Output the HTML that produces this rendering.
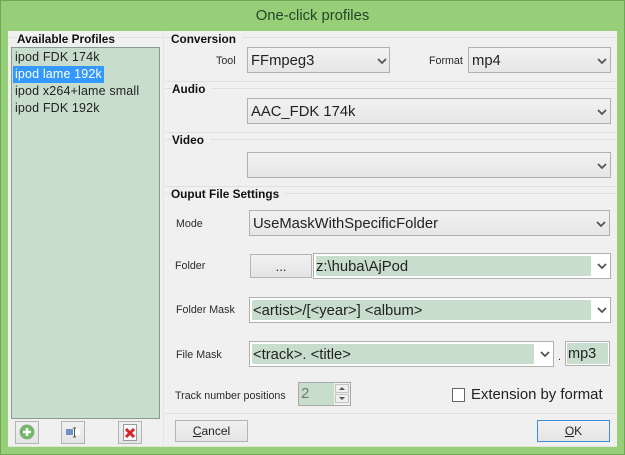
<!DOCTYPE html>
<html><head><meta charset="utf-8">
<style>
html,body{margin:0;padding:0}
body{width:625px;height:455px;overflow:hidden;position:relative;background:#96cf78;font-family:"Liberation Sans",sans-serif;color:#1a1a1a}
div,span{position:absolute;box-sizing:border-box;white-space:nowrap}
svg{position:absolute}
.t{font-size:10.7px;color:#2a2a2a;line-height:14px}
.h{font-size:11.8px;font-weight:bold;color:#111;line-height:14px}
.l{height:1px;background:#dfdfdf}
.c{border:1px solid #b0b0b0;background:linear-gradient(#f2f2f2,#e6e6e6);font-size:14.8px;line-height:26px;padding-left:3px;color:#222}
.w{border:1px solid #b0b0b0;background:#fff}
.g{background:#c9ddcd;font-size:14.8px;color:#222}
.b{border:1px solid #b4b4b4;background:linear-gradient(#f1f1f1,#e4e4e4);font-size:12px;text-align:center;color:#222}
.i{border:1px solid #c4c4c4;background:#efefef}
.a{width:10px;height:6px}
.li{left:15px;font-size:12.5px;line-height:17px;color:#222;letter-spacing:.15px}
</style></head><body>
<div style="left:0;top:0;width:625px;height:455px;border:1px solid #6fa855"></div>
<div style="left:0;top:8px;width:625px;text-align:center;font-size:14.8px;line-height:17px;color:#25452a">One-click profiles</div>
<div style="left:8px;top:31px;width:609px;height:416px;background:#f0f0f0;border-bottom:1px solid #dfe6da"></div>

<div class="l" style="left:9px;top:37px;width:155px"></div>
<div style="left:163px;top:31px;width:1px;height:415px;background:#e4e4e4"></div>
<div class="h" style="left:17px;top:32px;background:#f0f0f0;padding-right:3px">Available Profiles</div>
<div style="left:11px;top:47px;width:149px;height:372px;background:#c9ddcd;border:1px solid #8b9a90"></div>
<div class="li" style="top:49px">ipod FDK 174k</div>
<div style="left:13px;top:66px;width:91px;height:17px;background:#3399ff"></div>
<div class="li" style="top:66px;color:#fff">ipod lame 192k</div>
<div class="li" style="top:83px">ipod x264+lame small</div>
<div class="li" style="top:100px">ipod FDK 192k</div>

<div class="b" style="left:15px;top:421px;width:24px;height:23px"></div>
<svg style="left:19px;top:424px" width="16" height="16" viewBox="0 0 16 16"><circle cx="8" cy="8" r="7" fill="#6cbb62" stroke="#8fa98a"/><path d="M8 4v8M4 8h8" stroke="#fff" stroke-width="2.6"/></svg>
<div class="b" style="left:61px;top:421px;width:24px;height:23px"></div>
<svg style="left:65px;top:426px" width="16" height="13" viewBox="0 0 16 13"><rect x="1" y="3" width="14" height="6" fill="#fff"/><rect x="1" y="3" width="7" height="6" fill="#6f93c4"/><path d="M8 2h3M9.500 2v9M8 11h3" stroke="#555" fill="none"/></svg>
<div class="b" style="left:118px;top:421px;width:24px;height:23px"></div>
<svg style="left:123px;top:424px" width="14" height="17" viewBox="0 0 14 17"><rect x=".5" y=".5" width="13" height="16" fill="#fafafa" stroke="#999"/><path d="M3 5l8 8M11 5l-8 8" stroke="#d8232a" stroke-width="3"/></svg>

<div class="l" style="left:165px;top:37px;width:451px"></div>
<div class="h" style="left:171px;top:32px;background:#f0f0f0;padding-right:6px">Conversion</div>
<div class="t" style="left:216px;top:54px">Tool</div>
<div class="c" style="left:247px;top:47px;width:143px;height:26px">FFmpeg3</div>
<svg class="a" style="left:377px;top:58px" viewBox="0 0 10 6"><path d="M1 1l4 4 4-4" fill="none" stroke="#555" stroke-width="1.800"/></svg>
<div class="t" style="left:429px;top:54px">Format</div>
<div class="c" style="left:468px;top:47px;width:143px;height:26px">mp4</div>
<svg class="a" style="left:597px;top:58px" viewBox="0 0 10 6"><path d="M1 1l4 4 4-4" fill="none" stroke="#555" stroke-width="1.800"/></svg>

<div class="l" style="left:165px;top:81px;width:451px"></div>
<div class="l" style="left:165px;top:88px;width:451px"></div>
<div class="h" style="left:172px;top:82px;background:#f0f0f0;padding-right:6px">Audio</div>
<div class="c" style="left:247px;top:98px;width:364px;height:26px">AAC_FDK 174k</div>
<svg class="a" style="left:597px;top:109px" viewBox="0 0 10 6"><path d="M1 1l4 4 4-4" fill="none" stroke="#555" stroke-width="1.800"/></svg>

<div class="l" style="left:165px;top:132px;width:451px"></div>
<div class="l" style="left:165px;top:139px;width:451px"></div>
<div class="h" style="left:172px;top:133px;background:#f0f0f0;padding-right:6px">Video</div>
<div class="c" style="left:247px;top:152px;width:364px;height:26px"></div>
<svg class="a" style="left:597px;top:163px" viewBox="0 0 10 6"><path d="M1 1l4 4 4-4" fill="none" stroke="#555" stroke-width="1.800"/></svg>

<div class="l" style="left:165px;top:186px;width:451px"></div>
<div class="l" style="left:165px;top:193px;width:451px"></div>
<div class="h" style="left:171px;top:187px;background:#f0f0f0;padding-right:6px">Ouput File Settings</div>

<div class="t" style="left:176px;top:217px">Mode</div>
<div class="c" style="left:249px;top:210px;width:361px;height:26px">UseMaskWithSpecificFolder</div>
<svg class="a" style="left:596px;top:221px" viewBox="0 0 10 6"><path d="M1 1l4 4 4-4" fill="none" stroke="#555" stroke-width="1.800"/></svg>

<div class="t" style="left:175px;top:259px">Folder</div>
<div class="b" style="left:250px;top:254px;width:62px;height:24px;line-height:24px;font-size:13px">...</div>
<div class="w" style="left:313px;top:253px;width:298px;height:26px"></div>
<div class="g" style="left:316px;top:256px;width:275px;height:20px;line-height:22px;padding-left:0">z:\huba\AjPod</div>
<svg class="a" style="left:597px;top:263px" viewBox="0 0 10 6"><path d="M1 1l4 4 4-4" fill="none" stroke="#555" stroke-width="1.800"/></svg>

<div class="t" style="left:176px;top:303px">Folder Mask</div>
<div class="w" style="left:249px;top:297px;width:362px;height:26px"></div>
<div class="g" style="left:252px;top:300px;width:339px;height:20px;line-height:22px;padding-left:1px">&lt;artist&gt;/[&lt;year&gt;] &lt;album&gt;</div>
<svg class="a" style="left:597px;top:307px" viewBox="0 0 10 6"><path d="M1 1l4 4 4-4" fill="none" stroke="#555" stroke-width="1.800"/></svg>

<div class="t" style="left:176px;top:348px">File Mask</div>
<div class="w" style="left:249px;top:341px;width:305px;height:26px"></div>
<div class="g" style="left:252px;top:344px;width:282px;height:20px;line-height:22px;padding-left:1px">&lt;track&gt;. &lt;title&gt;</div>
<svg class="a" style="left:540px;top:351px" viewBox="0 0 10 6"><path d="M1 1l4 4 4-4" fill="none" stroke="#555" stroke-width="1.800"/></svg>
<div class="t" style="left:558px;top:350px">.</div>
<div class="w" style="left:565px;top:341px;width:45px;height:25px"></div>
<div class="g" style="left:567px;top:343px;width:41px;height:21px;line-height:22px;padding-left:1px;font-size:14.500px">mp3</div>

<div class="t" style="left:175px;top:389px">Track number positions</div>
<div style="left:298px;top:382px;width:53px;height:24px;border:1px solid #a9a9a9;background:#c9ddcd"></div>
<div style="left:301px;top:384px;font-size:15px;line-height:20px;color:#777">2</div>
<div style="left:334px;top:383px;width:16px;height:22px;background:#f0f0f0"></div>
<div class="i" style="left:335px;top:384px;width:14px;height:9px"></div>
<div class="i" style="left:335px;top:394px;width:14px;height:9px"></div>
<svg style="left:339px;top:386px" width="6" height="15" viewBox="0 0 6 15"><path d="M3 1l3 3H0zM0 11h6l-3 3z" fill="#555"/></svg>

<div style="left:452px;top:388px;width:13px;height:14px;border:1px solid #666;background:#fff"></div>
<div style="left:471px;top:386px;font-size:14.900px;line-height:18px;color:#222">Extension by format</div>

<div class="l" style="left:165px;top:413px;width:451px"></div>
<div class="b" style="left:175px;top:420px;width:73px;height:22px;line-height:20px"><u>C</u>ancel</div>
<div class="b" style="left:537px;top:420px;width:73px;height:22px;line-height:20px;border-color:#3c8fd6"><u>O</u>K</div>
</body></html>
